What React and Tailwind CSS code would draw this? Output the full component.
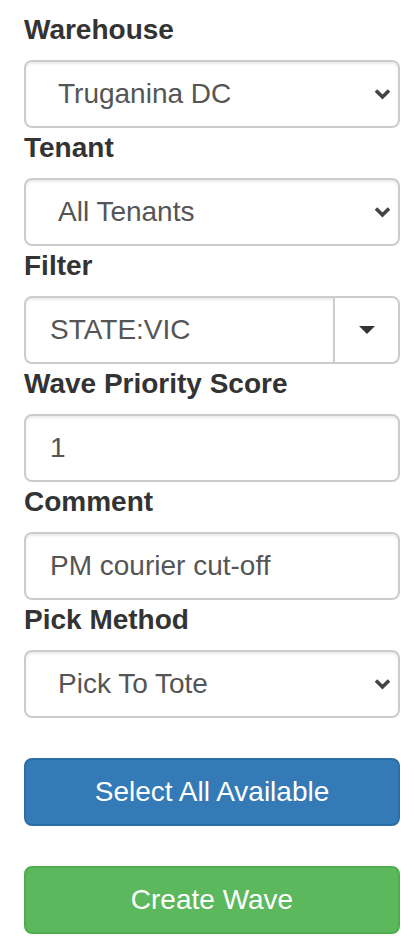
import React, { useState } from "react";

const Label = ({ children }) => (
  <label className="block text-[28px] leading-[40px] font-bold text-[#333] mb-[10px]">
    {children}
  </label>
);

const Chevron = () => (
  <svg
    className="pointer-events-none absolute right-[9px] top-1/2 -translate-y-1/2"
    width="17"
    height="12"
    viewBox="0 0 17 12"
  >
    <path d="M2 2.5 L8.5 9 L15 2.5" fill="none" stroke="#444" strokeWidth="3.6" />
  </svg>
);

const SelectBox = ({ value, options, onChange }) => (
  <div className="relative">
    <select
      value={value}
      onChange={(e) => onChange(e.target.value)}
      className="block w-full h-[68px] appearance-none bg-white border-2 border-[#ccc] rounded-[8px] pl-[32px] pr-[40px] text-[28px] text-[#555] shadow-[inset_0_2px_2px_rgba(0,0,0,0.075)] outline-none"
    >
      {options.map((o) => (
        <option key={o}>{o}</option>
      ))}
    </select>
    <Chevron />
  </div>
);

const TextBox = ({ value, onChange }) => (
  <input
    value={value}
    onChange={(e) => onChange(e.target.value)}
    className="block w-full h-[68px] bg-white border-2 border-[#ccc] rounded-[8px] px-[24px] text-[28px] text-[#555] shadow-[inset_0_2px_2px_rgba(0,0,0,0.075)] outline-none"
  />
);

const App = () => {
  let [warehouse, setWarehouse] = useState("Truganina DC");
  let [tenant, setTenant] = useState("All Tenants");
  let [filter, setFilter] = useState("STATE:VIC");
  let [score, setScore] = useState("1");
  let [comment, setComment] = useState("PM courier cut-off");
  let [method, setMethod] = useState("Pick To Tote");

  return (
    <div
      className="bg-white min-h-[950px] pt-[10px] pl-[24px] pr-[14px]"
      style={{ fontFamily: '"Liberation Sans", Arial, sans-serif' }}
    >
      <div>
        <Label>Warehouse</Label>
        <SelectBox
          value={warehouse}
          onChange={setWarehouse}
          options={["Truganina DC", "Derrimut DC"]}
        />
      </div>

      <div>
        <Label>Tenant</Label>
        <SelectBox
          value={tenant}
          onChange={setTenant}
          options={["All Tenants"]}
        />
      </div>

      <div>
        <Label>Filter</Label>
        <div className="flex h-[68px]">
          <input
            value={filter}
            onChange={(e) => setFilter(e.target.value)}
            className="flex-1 min-w-0 bg-white border-2 border-[#ccc] rounded-l-[8px] px-[24px] text-[28px] text-[#555] shadow-[inset_0_2px_2px_rgba(0,0,0,0.075)] outline-none"
          />
          <button className="w-[67px] -ml-[2px] flex items-center justify-center bg-white border-2 border-[#ccc] rounded-r-[8px]">
            <svg width="16" height="8" viewBox="0 0 16 8">
              <path d="M0 0 H16 L8 8 Z" fill="#333" />
            </svg>
          </button>
        </div>
      </div>

      <div>
        <Label>Wave Priority Score</Label>
        <TextBox value={score} onChange={setScore} />
      </div>

      <div>
        <Label>Comment</Label>
        <TextBox value={comment} onChange={setComment} />
      </div>

      <div>
        <Label>Pick Method</Label>
        <SelectBox
          value={method}
          onChange={setMethod}
          options={["Pick To Tote", "Pick To Cart"]}
        />
      </div>

      <button className="mt-[40px] block w-full h-[68px] bg-[#337ab7] border-2 border-[#2e6da4] rounded-[8px] text-white text-[28px]">
        Select All Available
      </button>

      <button className="mt-[40px] block w-full h-[68px] bg-[#5cb85c] border-2 border-[#4cae4c] rounded-[8px] text-white text-[28px]">
        Create Wave
      </button>
    </div>
  );
};

export default App;
